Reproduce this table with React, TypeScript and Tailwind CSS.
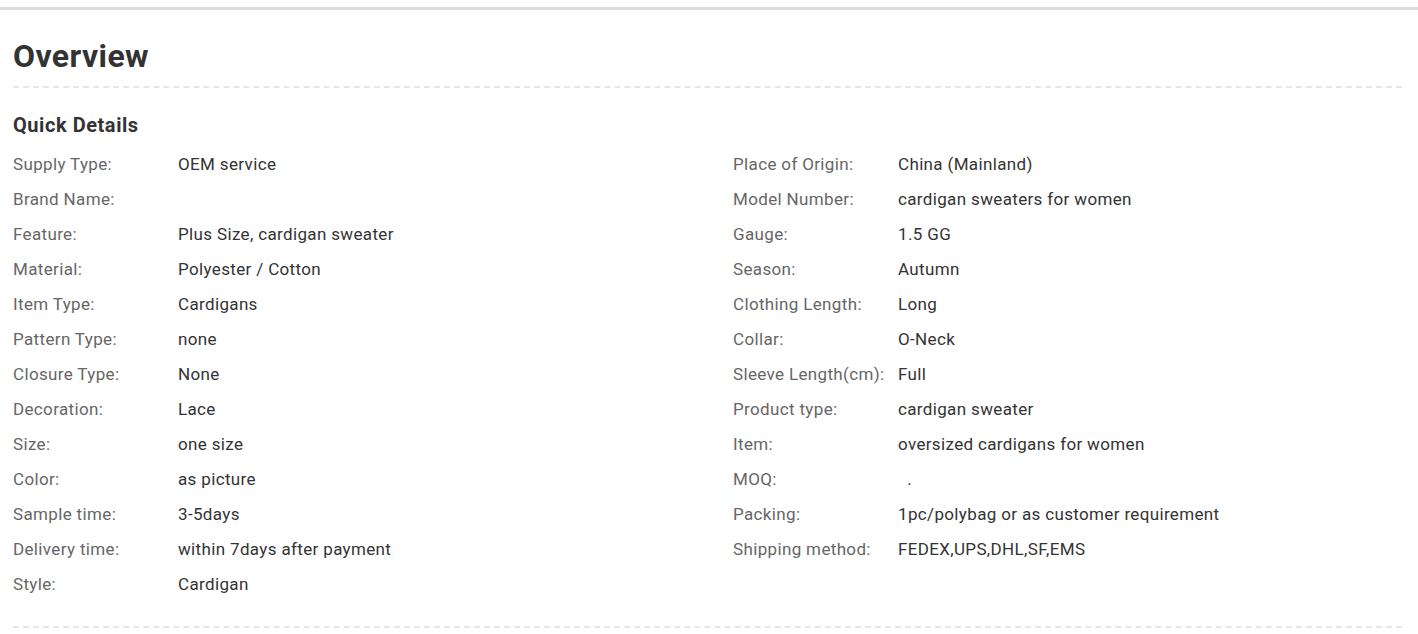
const left: [string, string][] = [
  ["Supply Type:", "OEM service"],
  ["Brand Name:", ""],
  ["Feature:", "Plus Size, cardigan sweater"],
  ["Material:", "Polyester / Cotton"],
  ["Item Type:", "Cardigans"],
  ["Pattern Type:", "none"],
  ["Closure Type:", "None"],
  ["Decoration:", "Lace"],
  ["Size:", "one size"],
  ["Color:", "as picture"],
  ["Sample time:", "3-5days"],
  ["Delivery time:", "within 7days after payment"],
  ["Style:", "Cardigan"],
];

const right: [string, string][] = [
  ["Place of Origin:", "China (Mainland)"],
  ["Model Number:", "cardigan sweaters for women"],
  ["Gauge:", "1.5 GG"],
  ["Season:", "Autumn"],
  ["Clothing Length:", "Long"],
  ["Collar:", "O-Neck"],
  ["Sleeve Length(cm):", "Full"],
  ["Product type:", "cardigan sweater"],
  ["Item:", "oversized cardigans for women"],
  ["MOQ:", "\u00a0\u00a0."],
  ["Packing:", "1pc/polybag or as customer requirement"],
  ["Shipping method:", "FEDEX,UPS,DHL,SF,EMS"],
];

function DetailRows({ rows }: { rows: [string, string][] }) {
  return (
    <div>
      {rows.map(([label, value]) => (
        <div className="grid grid-cols-[165px_1fr] text-[17px] leading-[35px] tracking-[0.35px]" key={label}>
          <span className="text-[#666]">{label}</span>
          <span className="text-[#333]">{value}</span>
        </div>
      ))}
    </div>
  );
}

export default function App() {
  return (
    <div className="min-h-screen bg-white pt-[7px] font-['Roboto','Liberation_Sans',sans-serif]">
      <div className="h-[3px] bg-[#ddd]" />
      <div className="pl-[13px] pr-[16px]">
        <h2 className="mt-[22px] text-[32px] font-bold leading-[48px] tracking-[0.4px] text-[#333]">Overview</h2>
        <div className="mt-[6px] border-b-2 border-dashed border-[#e5e5ea]" />
        <h3 className="mt-[22px] text-[20px] font-bold leading-[30px] tracking-[0.55px] text-[#333]">Quick Details</h3>
        <div className="mt-[7px] flex">
          <div className="w-[720px]">
            <DetailRows rows={left} />
          </div>
          <div className="flex-1">
            <DetailRows rows={right} />
          </div>
        </div>
        <div className="mt-[24px] border-b-2 border-dashed border-[#e5e5ea]" />
      </div>
    </div>
  );
}
